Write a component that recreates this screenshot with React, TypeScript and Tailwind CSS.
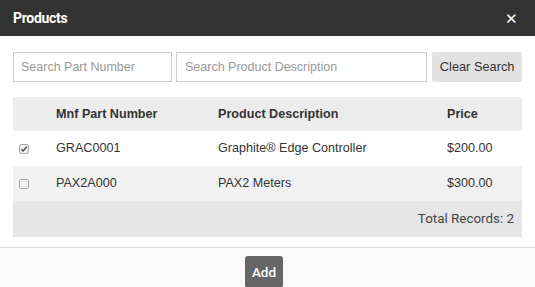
import React from "react";

const rows = [
  { checked: true, part: "GRAC0001", desc: "Graphite® Edge Controller", price: "$200.00" },
  { checked: false, part: "PAX2A000", desc: "PAX2 Meters", price: "$300.00" },
];

function Check({ on }: { on: boolean }) {
  return (
    <span className="flex h-[10px] w-[10px] items-center justify-center rounded-[2px] border border-[#a8a8a8] bg-[#efefef]">
      {on && (
        <svg viewBox="0 0 10 10" className="h-[8px] w-[8px]">
          <path d="M1.5 5.2 L4 7.5 L8.5 2" fill="none" stroke="#444" strokeWidth="1.8" />
        </svg>
      )}
    </span>
  );
}

export default function App() {
  return (
    <div className="h-[287px] w-[535px] overflow-hidden bg-white font-['Liberation_Sans',Arial,sans-serif] text-[12.6px] text-[#333]">
      {/* Header */}
      <div className="flex h-[36px] items-center justify-between bg-[#333333] pl-[13px] pr-[17px] text-white">
        <span className="font-['Roboto',sans-serif] text-[14px] font-bold tracking-[-0.3px]">Products</span>
        <span className="text-[15px] leading-none">✕</span>
      </div>

      <div className="border-b border-[#dcdcdc] px-[13px] pb-[10px] pt-[16px]">
        {/* Search bar */}
        <div className="flex h-[30px] gap-[4px]">
          <input
            className="w-[159px] border border-[#ccc] px-[7px] text-[12.5px] text-[#555] outline-none placeholder:text-[#999]"
            placeholder="Search Part Number"
          />
          <input
            className="w-[252px] border border-[#ccc] px-[8px] text-[12.5px] text-[#555] outline-none placeholder:text-[#999]"
            placeholder="Search Product Description"
          />
          <button className="ml-[1px] w-[90px] rounded-[2px] bg-[#e2e2e2] text-[12.8px] text-[#333]">Clear Search</button>
        </div>

        {/* Table */}
        <div className="mt-[15px]">
          <div className="flex h-[34px] items-center bg-[#ececec] font-bold">
            <div className="w-[43px]" />
            <div className="w-[162px]">Mnf Part Number</div>
            <div className="w-[229px]">Product Description</div>
            <div>Price</div>
          </div>
          {rows.map((r, i) => (
            <div key={r.part} className={`flex h-[35px] items-center ${i % 2 ? "bg-[#f1f1f1]" : "bg-white"}`}>
              <div className="w-[43px] pl-[6px]">
                <Check on={r.checked} />
              </div>
              <div className="w-[162px]">{r.part}</div>
              <div className="w-[229px]">{r.desc}</div>
              <div>{r.price}</div>
            </div>
          ))}
          <div className="flex h-[36px] items-center justify-end bg-[#e6e6e6] pr-[8px] font-['Roboto',sans-serif] text-[13.4px] text-[#444]">
            Total Records: 2
          </div>
        </div>
      </div>

      {/* Footer */}
      <div className="flex justify-center bg-[#fafafa] pt-[8px]">
        <button className="ml-[-7px] h-[32px] w-[38px] rounded-[3px] bg-[#666] font-['Roboto',sans-serif] text-[13.5px] font-medium text-white">
          Add
        </button>
      </div>
    </div>
  );
}
